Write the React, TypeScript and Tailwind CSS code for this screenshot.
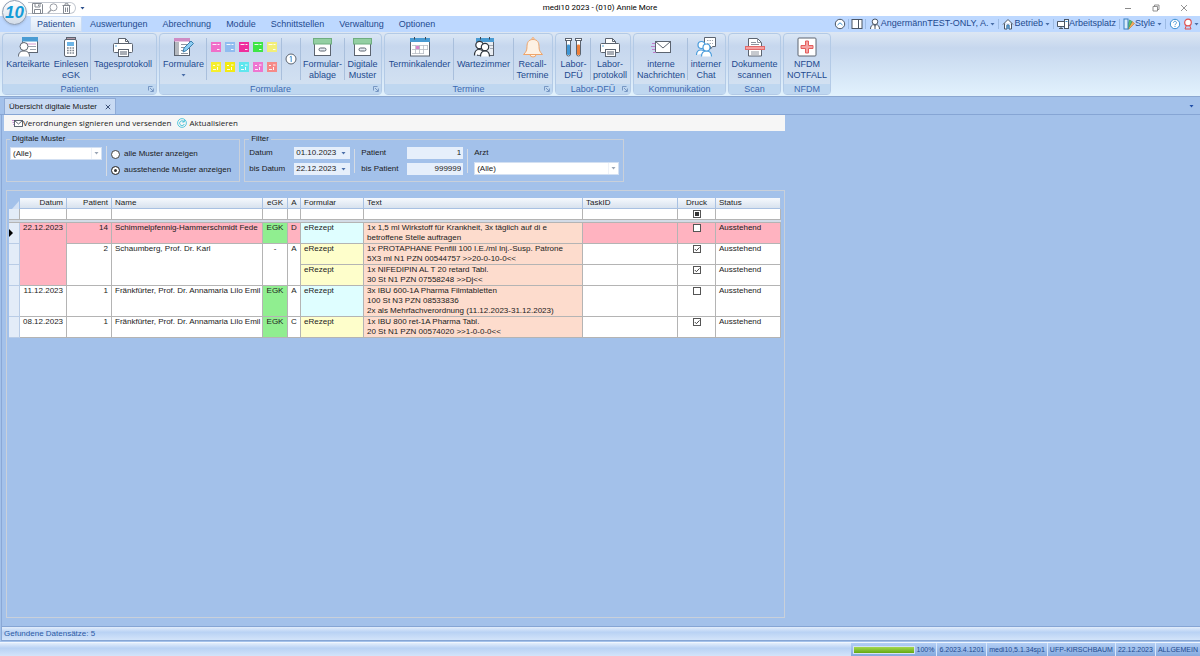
import React, { useState } from 'react'

/* ---------- shared bits ---------- */

const Caret: React.FC<{ className?: string }> = ({ className = 'text-[#4a6ea8]' }) => (
  <svg viewBox="0 0 5 3" className={`w-[5px] h-[3px] shrink-0 ${className}`} aria-hidden="true">
    <path d="M0.5 0h4L2.5 2.6z" fill="currentColor" />
  </svg>
)

const Icon: React.FC<{ children: React.ReactNode }> = ({ children }) => (
  <svg viewBox="0 0 22 22" className="w-[22px] h-[22px] shrink-0" fill="none" stroke="#5c6470" strokeWidth="1" aria-hidden="true">
    {children}
  </svg>
)

/* ---------- ribbon icons ---------- */

const CardIcon = () => (
  <Icon>
    <rect x="5.5" y="0.5" width="15" height="15" fill="#fff" />
    <rect x="5" y="0" width="16" height="4.5" fill="#4a9cd3" stroke="none" />
    <path d="M8 7h11" stroke="#d79bd0" />
    <path d="M11 9.5h8M13 12.500h6" stroke="#9aa3b0" />
    <path d="M1.5 19.5c0-4 2-5.500 5.500-5.500s5.500 1.500 5.500 5.500" fill="#fff" />
    <circle cx="7" cy="9.5" r="4" fill="#fff" />
  </Icon>
)

const TerminalIcon = () => (
  <Icon>
    <rect x="6.5" y="0.5" width="9" height="4" fill="#b49aa8" />
    <rect x="4.5" y="2.5" width="12" height="17" rx="1.5" fill="#fff" />
    <rect x="7" y="5" width="7" height="4" fill="#6cb4e6" stroke="none" />
    <path d="M7 11h7M7 13.5h7M7 16h7" stroke="#7d8590" strokeWidth="1.3" strokeDasharray="1.700 1" />
  </Icon>
)

const PrinterIcon = () => (
  <Icon>
    <path d="M6.5 8V1.500h7l3 3V8" fill="#fff" />
    <path d="M13.5 1.500v3h3" />
    <rect x="1.5" y="6.500" width="19" height="9" rx="1" fill="#fff" />
    <circle cx="4" cy="9" r="0.8" fill="#3d96d8" stroke="none" />
    <rect x="6.5" y="12.500" width="10" height="7" fill="#fff" />
    <rect x="8" y="14" width="7" height="4" fill="#a8adb5" stroke="none" />
  </Icon>
)

const FormIcon = () => (
  <Icon>
    <rect x="1.5" y="1.5" width="15" height="17" fill="#fff" />
    <rect x="1" y="1" width="16" height="3.5" fill="#cf8cc4" stroke="none" />
    <rect x="2" y="5" width="4" height="13" fill="#b4b8be" stroke="none" />
    <path d="M8 7.500h7M8 10.500h6M8 13.500h3M8 16.500h7" stroke="#8d949e" />
    <path d="M10 15l1-4 7-7 2.500 2.500-7 7z" fill="#8ccdf2" stroke="#3a7fae" />
  </Icon>
)

const ArchiveIcon = () => (
  <Icon>
    <rect x="2.5" y="6.5" width="16" height="12" fill="#fff" />
    <rect x="1.5" y="1.5" width="18" height="5.5" fill="#93cfa2" stroke="#6fae80" />
    <rect x="7" y="11" width="7" height="3" rx="1.5" fill="#e8edf4" />
  </Icon>
)

const CalendarIcon = () => (
  <Icon>
    <rect x="1.5" y="1.5" width="19" height="17.500" fill="#fff" />
    <rect x="1" y="1" width="20" height="4" fill="#4a9cd3" stroke="none" />
    <path d="M5.5 0v2.500M16.500 0v2.500" stroke="#3d4650" />
    <rect x="7" y="9" width="4" height="3" fill="#d985cc" stroke="none" />
    <path d="M3 8.500h16M3 12.500h16M3 16.500h12M6.500 8v9M10.500 8v9M14.500 8v9M18.500 8v5" stroke="#b7bcc4" strokeWidth="0.8" />
  </Icon>
)

const WaitingRoomIcon = () => (
  <Icon>
    <rect x="4.5" y="1.5" width="16" height="17" fill="#e9edf2" />
    <rect x="3" y="1" width="18" height="4" fill="#4a9cd3" stroke="none" />
    <path d="M7.500 0v2.500M16.500 0v2.500" stroke="#3d4650" />
    <path d="M15 8.500h5M17 11.500h3" stroke="#a4abb5" />
    <g fill="#fff" stroke="#30363e" strokeWidth="1.2">
      <path d="M1.5 18.500c0-4 1.500-6 4.500-6s4 1 4.500 3" />
      <circle cx="6.5" cy="8" r="3.7" />
      <path d="M7.500 19.500c0-4 1.500-5.500 4.500-5.500s4.500 1.500 4.500 5.500" />
      <circle cx="12" cy="10" r="3.7" />
    </g>
  </Icon>
)

const BellIcon = () => (
  <Icon>
    <g stroke="#efa56a" fill="#fdf1e4">
      <path d="M8 17.500a3 2.500 0 0 0 6 0" />
      <path d="M11 2.500c-4.500 0-6 3-6 7 0 4-1 5.500-3.500 8h19C18 15 17 13.500 17 9.500c0-4-1.500-7-6-7z" />
      <circle cx="11" cy="1.600" r="1" />
    </g>
  </Icon>
)

const TubesIcon = () => (
  <Icon>
    <path d="M3.500 3v14a2 2 0 0 0 4 0V3M13.500 3v14a2 2 0 0 0 4 0V3" fill="#fff" />
    <rect x="4" y="7.5" width="3" height="10.500" rx="1" fill="#3f97d6" stroke="none" />
    <rect x="14" y="7.5" width="3" height="10.500" rx="1" fill="#ee7f3a" stroke="none" />
    <rect x="2.5" y="1.500" width="6" height="2" fill="#fff" />
    <rect x="12.5" y="1.500" width="6" height="2" fill="#fff" />
  </Icon>
)

const MailIcon = () => (
  <Icon>
    <rect x="5.5" y="4.5" width="15" height="11" fill="#fff" />
    <path d="M5.500 4.500l7.500 6.500 7.500-6.500" />
    <path d="M2 6.500h3M1 9.500h4M2 12.500h3M3 15.500h3" stroke="#c07fcb" />
  </Icon>
)

const ChatIcon = () => (
  <Icon>
    <path d="M9.500 0.500h11v9h-3l-2 2.500v-2.500h-6z" fill="#fff" />
    <path d="M12 3.500h6M12 6.500h6" stroke="#a4abb5" strokeDasharray="1.500 1" />
    <g fill="#fff" stroke="#4a9cdc" strokeWidth="1.2">
      <path d="M1.500 18c0-3.500 1.500-5 4.500-5s4 1 4.500 3" />
      <circle cx="6.5" cy="8" r="3.5" />
      <path d="M6.500 19.500c0-4 2-5.500 5-5.500s5 1.500 5 5.500" />
      <circle cx="11.5" cy="10.5" r="3.500" />
    </g>
  </Icon>
)

const ScanIcon = () => (
  <Icon>
    <path d="M4.500 1.500h9l4 4v13.500h-13z" fill="#fff" />
    <path d="M13.500 1.500v4h4M7 5.500h5M7 7.500h8M7 15h8M7 17h8" stroke="#8d949e" />
    <rect x="1.500" y="9.500" width="19" height="3" fill="#f5a0a0" stroke="#e26a6a" />
  </Icon>
)

const EmergencyIcon = () => (
  <Icon>
    <rect x="2" y="1" width="18" height="18" rx="1" fill="#fff" />
    <path d="M9.500 4h3v4.500h4.500v3h-4.500v4.500h-3v-4.500H5v-3h4.500z" fill="#f5a3a3" stroke="#e35d5d" />
  </Icon>
)

/* ---------- ribbon ---------- */

interface RibbonButtonProps {
  icon: React.ReactNode
  lines: string[]
  width: string
  menu?: boolean
}

const RibbonButton: React.FC<RibbonButtonProps> = ({ icon, lines, width, menu }) => (
  <button className={`flex flex-col items-center pt-[3px] whitespace-nowrap leading-[11px] hover:bg-white/40 ${width}`}>
    {icon}
    {lines.map(line => (
      <span key={line}>{line}</span>
    ))}
    {menu && (
      <span className="h-[11px] flex items-center">
        <Caret />
      </span>
    )}
  </button>
)

const Separator = () => <div className="w-px my-1 bg-[#a9bfdc]" />

interface RibbonGroupProps {
  title: string
  launcher?: boolean
  children: React.ReactNode
}

const RibbonGroup: React.FC<RibbonGroupProps> = ({ title, launcher, children }) => (
  <section className="flex flex-col shrink-0 border border-[#b3cae6] rounded-sm bg-linear-to-b from-[#dbe7f5] via-[#c6d7ee] via-20% to-[#d5e3f2]">
    <div className="flex px-px h-[50px]">{children}</div>
    <div className="relative h-2.5 leading-[10px] text-center text-[#3d6ab0] bg-[#bfd7f0]">
      {title}
      {launcher && (
        <button className="absolute right-0.5 top-0.5" aria-label={`${title} Optionen`}>
          <svg viewBox="0 0 6 6" className="w-1.5 h-1.5" fill="none" stroke="#6486b8" strokeWidth="0.8">
            <path d="M0.500 4.500v-4h4M2 2l3 3M5.400 2.500v3h-3" />
          </svg>
        </button>
      )}
    </div>
  </section>
)

const formTiles = [
  { name: 'Muster 16', color: 'text-[#f06fc9]' },
  { name: 'Muster 1', color: 'text-[#8fbcf0]' },
  { name: 'Muster 4', color: 'text-[#ee2f9d]' },
  { name: 'Privatrezept', color: 'text-[#3fe546]' },
  { name: 'Muster 12', color: 'text-[#f2ee78]' },
  { name: 'Muster 2', color: 'text-[#f5ee2e]' },
  { name: 'Muster 6', color: 'text-[#f3ea12]' },
  { name: 'Muster 10', color: 'text-[#5fe6ee]' },
  { name: 'Muster 13', color: 'text-[#ee76d0]' },
  { name: 'BtM', color: 'text-[#f68a88]' }
]

const FormTiles = () => (
  <div className="grid grid-cols-5 gap-x-1 gap-y-2.5 px-1 pt-2 content-start">
    {formTiles.map((tile, i) => (
      <button key={tile.name} aria-label={tile.name} className={`w-2.5 h-2.5 ${tile.color}`}>
        <svg viewBox="0 0 10 10" className="w-2.5 h-2.5">
          <rect width="10" height="10" fill="currentColor" />
          {i < 5 ? (
            <path d="M1.500 2.500h4M6.500 2.500h2M6 7.500h2.500" stroke="#fff" strokeWidth="1" opacity="0.9" />
          ) : (
            <path d="M2 3.500h2M2 7.500h3M6 3h2.500M6.500 5v3" stroke="#fff" strokeWidth="1" opacity="0.9" />
          )}
        </svg>
      </button>
    ))}
  </div>
)

const Ribbon = () => (
  <div className="flex gap-0.5 pl-0.5 pt-px pb-px text-[9px] text-[#1e4a8f] border-b border-[#8ba7d0] bg-linear-to-b from-[#dde7f3] via-[#c6d7ee] via-25% to-[#e2f2fd]">
    <RibbonGroup title="Patienten" launcher>
      <RibbonButton icon={<CardIcon />} lines={['Karteikarte']} width="w-12" />
      <RibbonButton icon={<TerminalIcon />} lines={['Einlesen', 'eGK']} width="w-[38px]" />
      <Separator />
      <RibbonButton icon={<PrinterIcon />} lines={['Tagesprotokoll']} width="w-16" />
    </RibbonGroup>
    <RibbonGroup title="Formulare" launcher>
      <RibbonButton icon={<FormIcon />} lines={['Formulare']} width="w-[45px]" menu />
      <Separator />
      <FormTiles />
      <Separator />
      <button className="w-[18px] flex items-center justify-center" aria-label="Information">
        <svg viewBox="0 0 12 12" className="w-3 h-3" fill="none">
          <circle cx="6" cy="6" r="5" fill="#fff" stroke="#5c6470" />
          <path d="M4.800 4.200L6.200 3.200V9" stroke="#3b8fd0" />
        </svg>
      </button>
      <Separator />
      <RibbonButton icon={<ArchiveIcon />} lines={['Formular-', 'ablage']} width="w-[43px]" />
      <Separator />
      <RibbonButton icon={<ArchiveIcon />} lines={['Digitale', 'Muster']} width="w-[35px]" />
    </RibbonGroup>
    <RibbonGroup title="Termine" launcher>
      <RibbonButton icon={<CalendarIcon />} lines={['Terminkalender']} width="w-[67px]" />
      <Separator />
      <RibbonButton icon={<WaitingRoomIcon />} lines={['Wartezimmer']} width="w-[59px]" />
      <Separator />
      <RibbonButton icon={<BellIcon />} lines={['Recall-', 'Termine']} width="w-[37px]" />
    </RibbonGroup>
    <RibbonGroup title="Labor-DFÜ" launcher>
      <RibbonButton icon={<TubesIcon />} lines={['Labor-', 'DFÜ']} width="w-[33px]" />
      <Separator />
      <RibbonButton icon={<PrinterIcon />} lines={['Labor-', 'protokoll']} width="w-[38px]" />
    </RibbonGroup>
    <RibbonGroup title="Kommunikation">
      <RibbonButton icon={<MailIcon />} lines={['interne', 'Nachrichten']} width="w-[52px]" />
      <Separator />
      <RibbonButton icon={<ChatIcon />} lines={['interner', 'Chat']} width="w-9" />
    </RibbonGroup>
    <RibbonGroup title="Scan">
      <RibbonButton icon={<ScanIcon />} lines={['Dokumente', 'scannen']} width="w-[49px]" />
    </RibbonGroup>
    <RibbonGroup title="NFDM">
      <RibbonButton icon={<EmergencyIcon />} lines={['NFDM', 'NOTFALL']} width="w-11" />
    </RibbonGroup>
  </div>
)

/* ---------- title bar and menu ---------- */

const Logo = () => (
  <div className="absolute left-0.5 top-0 w-[25px] h-[25px] rounded-full border border-[#8c9bb0] bg-linear-to-b from-white to-[#d3dce8] flex items-center justify-center font-bold italic text-[17px] leading-none text-[#149bd7] shadow">
    10
  </div>
)

const TitleBar = () => (
  <div className="grid grid-cols-[1fr_auto_1fr] items-center h-4 bg-white">
    <div className="flex items-center pl-7">
      <div className="flex items-center gap-1 h-3 pl-1 pr-1 border border-l-0 border-[#c3c8d0] rounded-r-full">
        <button aria-label="Speichern">
          <svg viewBox="0 0 11 11" className="w-[11px] h-[11px]" fill="none" stroke="#858a92">
            <path d="M0.500 0.500h9l1 1v9h-10zM3 0.500v3.500h5V0.500M2.500 10V6.500h6V10M6.500 1.500v1.500" />
          </svg>
        </button>
        <button aria-label="Suchen">
          <svg viewBox="0 0 11 11" className="w-[11px] h-[11px]" fill="none" stroke="#9a9ea5">
            <circle cx="6.500" cy="4.300" r="3.500" />
            <path d="M4 7L0.800 10.300" strokeWidth="1.300" />
          </svg>
        </button>
        <button aria-label="Löschen">
          <svg viewBox="0 0 9 11" className="w-[9px] h-[11px]" fill="none" stroke="#858a92">
            <path d="M0.500 2.500h8M3 2V0.800h3V2M1.500 2.500v8h6v-8M3.500 4.500v4.500M5.500 4.500v4.500" />
          </svg>
        </button>
      </div>
      <button className="ml-1" aria-label="Schnellzugriff anpassen">
        <Caret className="text-[#2c4f8c]" />
      </button>
    </div>
    <h1 className="font-[Roboto,sans-serif] text-[8px] leading-4 text-black">medi10 2023 - (010) Annie More</h1>
    <div className="flex justify-end items-center gap-5 pr-3">
      <button aria-label="Minimieren">
        <svg viewBox="0 0 8 8" className="w-2 h-2" stroke="#8a8a8a" fill="none"><path d="M1 4.500h6" /></svg>
      </button>
      <button aria-label="Verkleinern">
        <svg viewBox="0 0 8 8" className="w-2 h-2" stroke="#777" strokeWidth="0.8" fill="none"><path d="M1 2.500h4.500V7H1zM2.500 2.500V1H7v4.500H5.500" /></svg>
      </button>
      <button aria-label="Schließen">
        <svg viewBox="0 0 8 8" className="w-2 h-2" stroke="#777" strokeWidth="0.8" fill="none"><path d="M1 1l6 6M7 1L1 7" /></svg>
      </button>
    </div>
  </div>
)

const menu = ['Patienten', 'Auswertungen', 'Abrechnung', 'Module', 'Schnittstellen', 'Verwaltung', 'Optionen']

const ToolIcon: React.FC<{ children: React.ReactNode }> = ({ children }) => (
  <svg viewBox="0 0 12 12" className="w-3 h-3 shrink-0" fill="none" stroke="#4b5563" aria-hidden="true">
    {children}
  </svg>
)

const ToolLine = () => <div className="w-px h-2.5 bg-[#9dbbe4]" />

const MenuBar = () => {
  const [active, setActive] = useState('Patienten')

  return (
    <div className="flex h-4 bg-[#bdd8ff] text-[9px] text-[#1e4a8f] whitespace-nowrap">
      <nav className="flex gap-px pl-[30px]">
        {menu.map(item => (
          <button
            key={item}
            onClick={() => setActive(item)}
            className={`px-[7px] leading-4 ${active === item ? 'bg-linear-to-b from-[#f2f8ff] to-[#dde8f5] shadow-[inset_0_0_0_1px_#c9dcf5] rounded-t-xs' : ''}`}
          >
            {item}
          </button>
        ))}
      </nav>
      <div className="ml-auto flex items-center gap-[3px] pr-px">
        <div className="flex items-center gap-0.5">
          <button aria-label="Menüband minimieren">
            <ToolIcon>
              <circle cx="6" cy="6" r="4.700" fill="#fff" />
              <path d="M3.500 7L6 4.800 8.500 7" stroke="#3b8fd0" />
            </ToolIcon>
          </button>
          <ToolLine />
          <button aria-label="Seitenleiste">
            <ToolIcon>
              <rect x="1" y="1.500" width="10" height="9" fill="#fff" />
              <path d="M7.500 1.500v9" />
            </ToolIcon>
          </button>
          <ToolLine />
        </div>
        <button className="flex items-center">
          <ToolIcon>
            <path d="M1.500 11c0-3 1.500-4 3-4.500L6 8.500l1.500-2c1.500.5 3 1.500 3 4.500M6 8.500v2.500" fill="#fff" />
            <circle cx="6" cy="3.800" r="2.800" fill="#fff" />
          </ToolIcon>
          AngermännTEST-ONLY, A.
          <span className="ml-0.5"><Caret /></span>
        </button>
        <ToolLine />
        <button className="flex items-center">
          <ToolIcon>
            <path d="M1 6.500L6 1.500l5 5M2.500 5.500v5.500h2.500V7h2v4h2.500V5.500" fill="#fff" />
            <path d="M5 11V7.500h2V11" stroke="#3b8fd0" />
          </ToolIcon>
          Betrieb
          <span className="ml-0.5"><Caret /></span>
        </button>
        <ToolLine />
        <button className="flex items-center">
          <ToolIcon>
            <path d="M0.500 3.500h7v5h-7zM2 10.500h4M4 8.500v2" fill="#fff" />
            <rect x="7.500" y="1.500" width="4" height="9" fill="#fff" />
            <path d="M8.500 3.500h2" stroke="#3b8fd0" />
          </ToolIcon>
          Arbeitsplatz
        </button>
        <ToolLine />
        <button className="flex items-center">
          <ToolIcon>
            <path d="M4.500 11L9 3.500l2.500 2L6 11z" fill="#f3a95b" stroke="#c9813a" strokeWidth="0.7" />
            <path d="M4 10L6.500 2l2.500 1.500L5 11z" fill="#5bbf7a" stroke="#3a9a58" strokeWidth="0.7" />
            <rect x="1" y="1" width="4" height="10" fill="#d9ecfb" stroke="#3b7fc0" />
          </ToolIcon>
          Style
          <span className="ml-0.5"><Caret /></span>
        </button>
        <ToolLine />
        <div className="flex items-center gap-px">
          <button aria-label="Hilfe">
            <ToolIcon>
              <circle cx="6" cy="6" r="4.700" fill="#fff" stroke="#3b8fd0" />
              <path d="M4.500 4.800c0-2 3-2 3 0 0 1.200-1.500 1-1.500 2.400M6 8v1" stroke="#3b8fd0" strokeWidth="0.9" />
            </ToolIcon>
          </button>
          <button className="flex items-center" aria-label="Zertifikat">
            <ToolIcon>
              <path d="M4.500 7L3 11h6L7.500 7" stroke="#e05050" />
              <circle cx="6" cy="4.500" r="3.300" fill="#fff" stroke="#e05050" strokeWidth="1.200" />
            </ToolIcon>
            <Caret />
          </button>
        </div>
      </div>
    </div>
  )
}

/* ---------- filter area ---------- */

const DropDown: React.FC<{ id: string; label?: string }> = ({ id, label }) => (
  <div className="relative h-[13px] bg-white border border-[#d3e0f2]">
    <select id={id} aria-label={label} className="block w-full h-full appearance-none pl-0.5 leading-[11px] text-[8px] outline-none">
      <option>(Alle)</option>
    </select>
    <span className="absolute right-0 inset-y-0 w-2.5 flex items-center justify-center border-l border-[#eef2f8] pointer-events-none">
      <Caret className="text-[#9aa5b5]" />
    </span>
  </div>
)

const DateField: React.FC<{ id: string; value: string }> = ({ id, value }) => {
  const [date, setDate] = useState(value)
  return (
    <div className="flex items-center w-14 h-3 bg-[#e6effb]">
      <input id={id} value={date} onChange={e => setDate(e.target.value)} className="w-[47px] pl-0.5 h-3 leading-3 outline-none" />
      <button aria-label="Kalender öffnen" className="h-3 flex items-center"><Caret /></button>
    </div>
  )
}

const NumberField: React.FC<{ id: string; value: string }> = ({ id, value }) => (
  <input id={id} defaultValue={value} className="w-14 h-3 pr-0.5 text-right leading-3 bg-[#e6effb] outline-none" />
)

const Divider = () => <div className="w-px my-0.5 bg-[#d5dbe4]" />

const Radio: React.FC<{ label: string; checked: boolean; onChange: () => void }> = ({ label, checked, onChange }) => (
  <label className="flex items-center gap-1 h-4 whitespace-nowrap">
    <input
      type="radio"
      name="anzeige"
      checked={checked}
      onChange={onChange}
      className="appearance-none w-[9px] h-[9px] rounded-full border border-[#444] bg-white checked:bg-[#333] checked:shadow-[inset_0_0_0_2px_#fff]"
    />
    {label}
  </label>
)

const FilterArea = () => {
  const [mode, setMode] = useState<'alle' | 'ausstehend'>('ausstehend')

  return (
    <div className="flex gap-1 pl-0.5 pt-[3px]">
      <fieldset className="border border-[#c9d0da] pl-[3px] pr-2 h-12">
        <legend className="px-0.5 leading-[10px]">Digitale Muster</legend>
        <div className="flex gap-1">
          <div className="w-[92px] pt-[3px]">
            <DropDown id="muster" label="Digitale Muster" />
          </div>
          <Divider />
          <div className="pt-0.5">
            <Radio label="alle Muster anzeigen" checked={mode === 'alle'} onChange={() => setMode('alle')} />
            <Radio label="ausstehende Muster anzeigen" checked={mode === 'ausstehend'} onChange={() => setMode('ausstehend')} />
          </div>
        </div>
      </fieldset>
      <fieldset className="border border-[#c9d0da] px-1 h-12">
        <legend className="px-0.5 leading-[10px]">Filter</legend>
        <div className="flex gap-1 pt-[3px]">
          <div className="grid grid-cols-[45px_auto] gap-y-1 items-center">
            <label htmlFor="von">Datum</label>
            <DateField id="von" value="01.10.2023" />
            <label htmlFor="bis">bis Datum</label>
            <DateField id="bis" value="22.12.2023" />
          </div>
          <Divider />
          <div className="grid grid-cols-[46px_auto] gap-y-1 items-center pl-0.5">
            <label htmlFor="patVon">Patient</label>
            <NumberField id="patVon" value="1" />
            <label htmlFor="patBis">bis Patient</label>
            <NumberField id="patBis" value="999999" />
          </div>
          <Divider />
          <div className="w-[147px] pl-0.5 flex flex-col gap-[3px]">
            <label htmlFor="arzt" className="leading-3">Arzt</label>
            <DropDown id="arzt" />
          </div>
        </div>
      </fieldset>
    </div>
  )
}

/* ---------- data table ---------- */

interface Row {
  datum?: { text: string; span: number }
  patient?: { nr: string; name: string; egk: boolean; art: string; span: number }
  formColor: string
  text: string[]
  druck: boolean
  current?: boolean
}

const rows: Row[] = [
  {
    datum: { text: '22.12.2023', span: 3 },
    patient: { nr: '14', name: 'Schimmelpfennig-Hammerschmidt Fede', egk: true, art: 'D', span: 1 },
    formColor: 'bg-[#dffeff]',
    text: ['1x 1,5 ml Wirkstoff für Krankheit, 3x täglich auf di e', 'betroffene Stelle auftragen'],
    druck: false,
    current: true
  },
  {
    patient: { nr: '2', name: 'Schaumberg, Prof. Dr. Karl', egk: false, art: 'A', span: 2 },
    formColor: 'bg-[#fefecb]',
    text: ['1x PROTAPHANE Penfill 100 I.E./ml Inj.-Susp. Patrone', '5X3 ml N1 PZN 00544757 >>20-0-10-0<<'],
    druck: true
  },
  {
    formColor: 'bg-[#fefecb]',
    text: ['1x NIFEDIPIN AL T 20 retard Tabl.', '30 St N1 PZN 07558248 >>Dj<<'],
    druck: true
  },
  {
    datum: { text: '11.12.2023', span: 1 },
    patient: { nr: '1', name: 'Fränkfürter, Prof. Dr. Annamaria Lilo Emil', egk: true, art: 'A', span: 1 },
    formColor: 'bg-[#dffeff]',
    text: ['3x IBU 600-1A Pharma Filmtabletten', '100 St N3 PZN 08533836', '2x als Mehrfachverordnung (11.12.2023-31.12.2023)'],
    druck: false
  },
  {
    datum: { text: '08.12.2023', span: 1 },
    patient: { nr: '1', name: 'Fränkfürter, Prof. Dr. Annamaria Lilo Emil', egk: true, art: 'C', span: 1 },
    formColor: 'bg-[#fefecb]',
    text: ['1x IBU 800 ret-1A Pharma Tabl.', '20 St N1 PZN 00574020 >>1-0-0-0<<'],
    druck: true
  }
]

const columns = [
  { title: '', width: 'w-[11px]', align: '' },
  { title: 'Datum', width: 'w-[47px]', align: 'text-right' },
  { title: 'Patient', width: 'w-[45px]', align: 'text-right' },
  { title: 'Name', width: 'w-[151px]', align: 'text-left' },
  { title: 'eGK', width: 'w-[25px]', align: 'text-center' },
  { title: 'A', width: 'w-[13px]', align: 'text-center' },
  { title: 'Formular', width: 'w-[63px]', align: 'text-left' },
  { title: 'Text', width: 'w-[219px]', align: 'text-left' },
  { title: 'TaskID', width: 'w-[95px]', align: 'text-left' },
  { title: 'Druck', width: 'w-[38px]', align: 'text-center' },
  { title: 'Status', width: 'w-[65px]', align: 'text-left' }
]

const CheckBox: React.FC<{ label: string; initial: boolean }> = ({ label, initial }) => (
  <span className="inline-grid mt-px align-top">
    <input type="checkbox" defaultChecked={initial} aria-label={label} className="peer col-start-1 row-start-1 appearance-none w-2 h-2 border border-[#555] bg-white" />
    <svg viewBox="0 0 8 8" className="hidden peer-checked:block col-start-1 row-start-1 w-2 h-2 pointer-events-none" fill="none" stroke="#333" strokeWidth="0.9">
      <path d="M1.800 4l1.600 1.700L6.500 2.400" />
    </svg>
  </span>
)

const cell = 'border-r border-b border-[#b4b4b4] px-[3px] align-top whitespace-nowrap'

const PatternTable = () => (
  <table className="table-fixed border-separate border-spacing-0 w-full leading-[10px]">
    <thead>
      <tr className="h-[11px]">
        {columns.map((col, i) => (
          <th
            key={col.title}
            className={`font-normal py-0 ${i === 0 ? 'px-0' : 'px-[3px] border-r border-b border-[#a9c1e2] bg-linear-to-b from-[#f6f9fd] to-[#d8e2ee]'} ${col.width} ${col.align}`}
          >
            {i === 0 ? (
              <svg viewBox="0 0 11 10" className="block w-[11px] h-2.5"><path d="M10 2v8H3z" fill="#d3e1f4" /></svg>
            ) : (
              col.title
            )}
          </th>
        ))}
      </tr>
    </thead>
    <tbody>
      <tr className="h-[11px]">
        {columns.map((col, i) => (
          <td key={col.title} className={`border-r border-b border-[#b4b4b4] p-0 text-center ${i === 0 ? 'bg-[#e3ecf8]' : 'bg-white'}`}>
            {col.title === 'Druck' && (
              <input type="checkbox" aria-label="Druck filtern" className="appearance-none block mx-auto w-2 h-2 border border-[#555] bg-[#333] shadow-[inset_0_0_0_1px_#fff]" />
            )}
          </td>
        ))}
      </tr>
      <tr className="h-[3px]">
        <td colSpan={11} className="p-0 bg-[#d3dbe6] border-b border-[#b4b4b4]" />
      </tr>
      {rows.map((row, i) => {
        const bg = row.current ? 'bg-[#ffb3c0]' : 'bg-white'
        return (
          <tr key={i}>
            <td className="border-r border-b border-[#b9cce6] bg-[#e3ecf8] p-0 align-middle">
              {row.current && (
                <svg viewBox="0 0 4 8" className="block w-1 h-2"><path d="M0 0v8l4-4z" fill="#000" /></svg>
              )}
            </td>
            {row.datum && (
              <td rowSpan={row.datum.span} className={`${cell} text-right ${bg}`}>{row.datum.text}</td>
            )}
            {row.patient && (
              <>
                <td rowSpan={row.patient.span} className={`${cell} text-right ${bg}`}>{row.patient.nr}</td>
                <td rowSpan={row.patient.span} className={`${cell} ${bg}`}>{row.patient.name}</td>
                <td rowSpan={row.patient.span} className={`${cell} text-center ${row.patient.egk ? 'bg-[#90ee90]' : 'bg-white'}`}>
                  {row.patient.egk ? 'EGK' : '-'}
                </td>
                <td rowSpan={row.patient.span} className={`${cell} text-center ${bg}`}>{row.patient.art}</td>
              </>
            )}
            <td className={`${cell} ${row.formColor}`}>eRezept</td>
            <td className={`${cell} bg-[#fddccd]`}>
              {row.text.map(line => (
                <div key={line}>{line}</div>
              ))}
            </td>
            <td className={`${cell} ${bg}`} />
            <td className={`${cell} text-center ${bg}`}>
              <CheckBox label={`Druck ${i + 1}`} initial={row.druck} />
            </td>
            <td className={`${cell} ${bg}`}>Ausstehend</td>
          </tr>
        )
      })}
    </tbody>
  </table>
)

/* ---------- status bars ---------- */

const statusItems = ['6.2023.4.1201', 'medi10,5.1.34sp1', 'UFP-KIRSCHBAUM', '22.12.2023', 'ALLGEMEIN']

const bar = 'bg-linear-to-b from-[#e2edfb] via-[#b9d2f4] via-40% to-[#d3e4fa]'

const App: React.FC = () => {
  return (
    <div className="relative min-h-screen flex flex-col overflow-hidden bg-[#a3c1ea] font-['Liberation_Sans',Arial,sans-serif] text-[8px] text-[#1b1b1b]">
      <TitleBar />
      <MenuBar />
      <Logo />
      <Ribbon />

      {/* Document tabs */}
      <div className="flex items-end justify-between h-[18px] pl-1 pr-1.5 border-b border-[#86a5d4]">
        <div className="flex items-center gap-2 h-4 px-1 bg-[#c8daf3] border border-b-0 border-[#8fabd6]">
          <span>Übersicht digitale Muster</span>
          <button aria-label="Tab schließen">
            <svg viewBox="0 0 6 6" className="w-1.5 h-1.5" stroke="#3a4f77" fill="none"><path d="M0.800 0.800l4.400 4.400M5.200 0.800L0.800 5.200" /></svg>
          </button>
        </div>
        <button className="mb-1.5" aria-label="Tabliste"><Caret className="text-[#1f4ea8]" /></button>
      </div>

      {/* Document */}
      <main className="flex-1 flex flex-col border-l border-[#8aa8d6] ml-px">
        <div className="flex-1 flex flex-col w-full max-w-[783px] pl-0.5">
          <div className="flex items-center gap-1.5 h-4 pl-2 bg-[#f6f6f6] font-['Open_Sans',sans-serif] leading-4">
            <button className="flex items-center">
              <svg viewBox="0 0 11 9" className="w-[11px] h-[9px]" fill="none" stroke="#4b5563" strokeWidth="0.9">
                <rect x="2.500" y="1.500" width="8" height="6" fill="#fff" />
                <path d="M2.500 1.500l4 3.500 4-3.500" />
                <path d="M0 1.500h2M0.500 3.500h1.500M1 5.500h1" stroke="#c07fcb" />
              </svg>
              Verordnungen signieren und versenden
            </button>
            <button className="flex items-center gap-0.5">
              <svg viewBox="0 0 10 10" className="w-2.5 h-2.5" fill="none" stroke="#35bdd6">
                <circle cx="5" cy="5" r="4.400" strokeWidth="0.8" />
                <path d="M7 3.800A2.400 2.400 0 1 0 7.300 6M7.300 2v2H5.300" strokeWidth="0.9" />
              </svg>
              Aktualisieren
            </button>
          </div>
          <FilterArea />
          <div className="flex-1 ml-0.5 mt-2 mb-2 pt-[7px] pl-0.5 pr-[3px] border border-[#c9d0da]">
            <PatternTable />
          </div>
        </div>
        <div className={`h-[15px] pl-0.5 leading-[13px] border-y border-[#86a5d4] text-[#2c5aa5] ${bar}`}>Gefundene Datensätze: 5</div>
      </main>

      {/* Status bar */}
      <footer className={`flex justify-end h-3.5 mt-px border-t border-[#f0f6ff] text-[#1e4a8f] ${bar}`}>
        <div className="flex items-center pl-0.5 bg-linear-to-b from-[#b4cff5] to-[#84a9de] text-[7px] leading-[13px] whitespace-nowrap">
          <div className="w-[62px] h-2 mr-0.5 border border-[#d5e2f4] bg-[#d5e2f4]" role="progressbar" aria-valuenow={100} aria-label="Fortschritt">
            <div className="w-full h-full bg-linear-to-b from-[#a4d84c] to-[#64a80c]" />
          </div>
          <span className="pr-0.5">100%</span>
          {statusItems.map(item => (
            <span key={item} className="px-0.5 border-l border-[#d9e7fb]">{item}</span>
          ))}
        </div>
      </footer>
    </div>
  )
}

export default App
